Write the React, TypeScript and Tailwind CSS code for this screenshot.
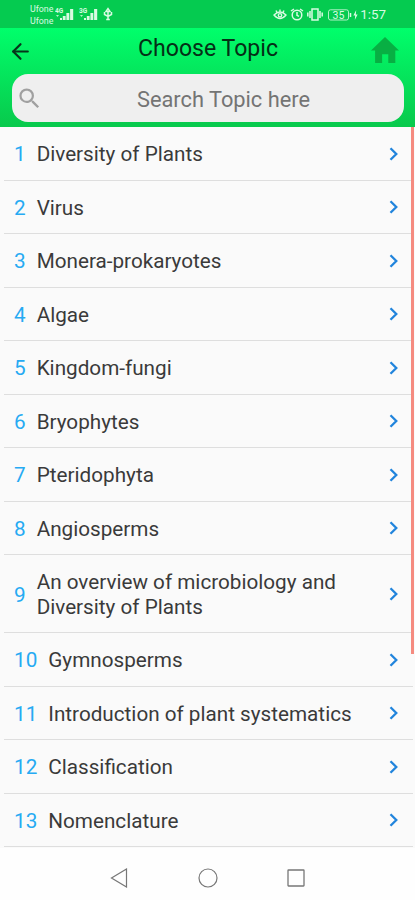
import { ArrowLeft } from 'lucide-react';
import { MdSearch } from 'react-icons/md';

interface Topic {
  id: number;
  title: string;
}

const TOPICS: Topic[] = [
  { id: 1, title: 'Diversity of Plants' },
  { id: 2, title: 'Virus' },
  { id: 3, title: 'Monera-prokaryotes' },
  { id: 4, title: 'Algae' },
  { id: 5, title: 'Kingdom-fungi' },
  { id: 6, title: 'Bryophytes' },
  { id: 7, title: 'Pteridophyta' },
  { id: 8, title: 'Angiosperms' },
  { id: 9, title: 'An overview of microbiology and Diversity of Plants' },
  { id: 10, title: 'Gymnosperms' },
  { id: 11, title: 'Introduction of plant systematics' },
  { id: 12, title: 'Classification' },
  { id: 13, title: 'Nomenclature' },
];

/* ---------- status bar ---------- */

function Signal({ label }: { label: string }) {
  return (
    <svg width="20" height="14" viewBox="0 0 20 14" fill="currentColor">
      <text x="0" y="6" fontSize="6.5" fontWeight="700">{label}</text>
      <path d="M5 11h2v2H5zM7.8 9h2.8v4H7.8zM11.4 6h2.9v7h-2.9zM15.1 2h3.1v11h-3.1z" />
      <path d="M1 8h3l-1.5 2z" opacity=".8" />
    </svg>
  );
}

function StatusBar() {
  return (
    <div className="flex h-7 items-center justify-between bg-[#05cb50] pl-[30px] pr-[29px] text-[#d9fbe2]">
      <div className="flex items-center">
        <div className="w-[24px] pt-[2px] text-[8.8px] leading-[12px]">
          <div>Ufone</div>
          <div>Ufone</div>
        </div>
        <div className="flex gap-[4px] pl-px">
          <Signal label="4G" />
          <Signal label="3G" />
          <svg width="10" height="14" viewBox="0 0 10 14" fill="none" stroke="currentColor" strokeWidth="1.5">
            <path d="M5 13V5M3.2 12.5h3.6M1.5 5v2.5L5 9.5l3.5-2V5M3 4.5 5 1.5l2 3z" />
          </svg>
        </div>
      </div>
      <div className="flex items-center pt-px">
        <svg width="14" height="12" viewBox="0 0 14 12" fill="none" stroke="currentColor" strokeWidth="1.4">
          <path d="M1 6q6-6 12 0-6 7-12 0zM3 1.5l1 2M7 .5v2M11 1.5l-1 2" />
          <circle cx="7" cy="6.3" r="1.7" />
        </svg>
        <svg className="ml-[3px]" width="14" height="13" viewBox="0 0 14 13" fill="none" stroke="currentColor" strokeWidth="1.5">
          <circle cx="7" cy="7" r="4.8" />
          <path d="M7 4v3.3l2 1M1 3l3-2M13 3l-3-2" />
        </svg>
        <svg className="ml-[3px]" width="16" height="13" viewBox="0 0 16 13" fill="none" stroke="currentColor" strokeWidth="1.5">
          <path d="M5 1h6v11H5zM3 3v7M13 3v7M.8 4.5v4M15.2 4.5v4" />
        </svg>
        <svg className="ml-[5px]" width="24" height="12" viewBox="0 0 24 12" fill="none" stroke="currentColor">
          <rect x=".5" y=".8" width="20" height="10.2" rx="2" opacity=".8" />
          <path d="M22.5 4v4" strokeWidth="1.5" />
          <text x="4.5" y="9.7" fontSize="10.5" fill="currentColor" stroke="none">35</text>
        </svg>
        <svg className="ml-[1px]" width="5" height="10" viewBox="0 0 5 10" fill="currentColor">
          <path d="M3.2 0 .4 5.5h1.8L1.8 10l2.8-5.6H2.8z" />
        </svg>
        <span className="ml-[2px] text-[13.4px] leading-none">1:57</span>
      </div>
    </div>
  );
}

/* ---------- header ---------- */

function Header() {
  return (
    <header className="flex h-[99px] flex-col bg-linear-to-b from-[#00ff6b] to-[#08c94c] px-3">
      <div className="flex h-[46px] shrink-0 items-center">
        <button className="-ml-1 mt-px">
          <ArrowLeft size={25} strokeWidth={2.1} color="#06351a" />
        </button>
        <h1 className="-mt-[3px] flex-1 pl-[12px] text-center text-[23.1px] text-[#052f16]">Choose Topic</h1>
        <button className="-mt-[3px] mr-[4px]">
          <svg width="28" height="26" viewBox="0 0 28 26" fill="#08af43">
            <path d="M14 0 28 13.5h-3.7V26h-7v-8.8h-6.2V26h-7V13.5H0z" />
          </svg>
        </button>
      </div>
      <div className="mr-[-1px] flex h-12 shrink-0 items-center rounded-[16px] bg-[#efefef]">
        <MdSearch className="ml-1" size={27} color="#a0a0a0" />
        <span className="flex-1 pt-[4px] text-center text-[21.8px] text-[#747474]">Search Topic here</span>
      </div>
    </header>
  );
}

/* ---------- list ---------- */

function TopicRow({ topic }: { topic: Topic }) {
  return (
    <li className="ml-1 mr-[2px] flex min-h-[53.5px] items-center border-b border-[#dedede] pl-[10px] pr-[14px] text-[20.7px] leading-[24.5px]">
      <span className="mr-[11px] shrink-0 pt-[2px] text-[#26aaf3]">{topic.id}</span>
      <span className="w-[322px] pb-[13px] pt-[15px] text-[#3a3a3a]">{topic.title}</span>
      <svg className="ml-auto shrink-0" width="10" height="14" viewBox="0 0 10 14" fill="none" stroke="#2184dc" strokeWidth="2.3">
        <path d="M1.5 1.2 7.3 7l-5.8 5.8" />
      </svg>
    </li>
  );
}

function NavBar() {
  return (
    <nav className="flex h-[52px] shrink-0 items-center bg-[#fefefe] pl-[110px] pt-[8px]">
      <svg width="18" height="20" viewBox="0 0 18 20" fill="none" stroke="#777" strokeWidth="1.2">
        <path d="M16.5 1v18L1.5 10z" />
      </svg>
      <svg className="ml-[70px]" width="20" height="20" viewBox="0 0 20 20" fill="none" stroke="#777" strokeWidth="1.2">
        <circle cx="10" cy="10" r="9" />
      </svg>
      <svg className="ml-[69px]" width="18" height="18" viewBox="0 0 18 18" fill="none" stroke="#777" strokeWidth="1.3">
        <rect x="1" y="1" width="16" height="16" rx=".5" />
      </svg>
    </nav>
  );
}

export default function App() {
  return (
    <div className="flex h-[900px] w-[415px] flex-col overflow-hidden bg-[#fafafa] font-['Roboto',sans-serif]">
      <StatusBar />
      <Header />
      <main className="relative h-[721px] shrink-0 pt-[0.4px]">
        <ul>
          {TOPICS.map((topic) => (
            <TopicRow key={topic.id} topic={topic} />
          ))}
        </ul>
        {/* scroll indicator */}
        <div className="absolute right-[1px] top-0 h-[527px] w-[3px] bg-[#f58b80]" />
      </main>
      <NavBar />
    </div>
  );
}
